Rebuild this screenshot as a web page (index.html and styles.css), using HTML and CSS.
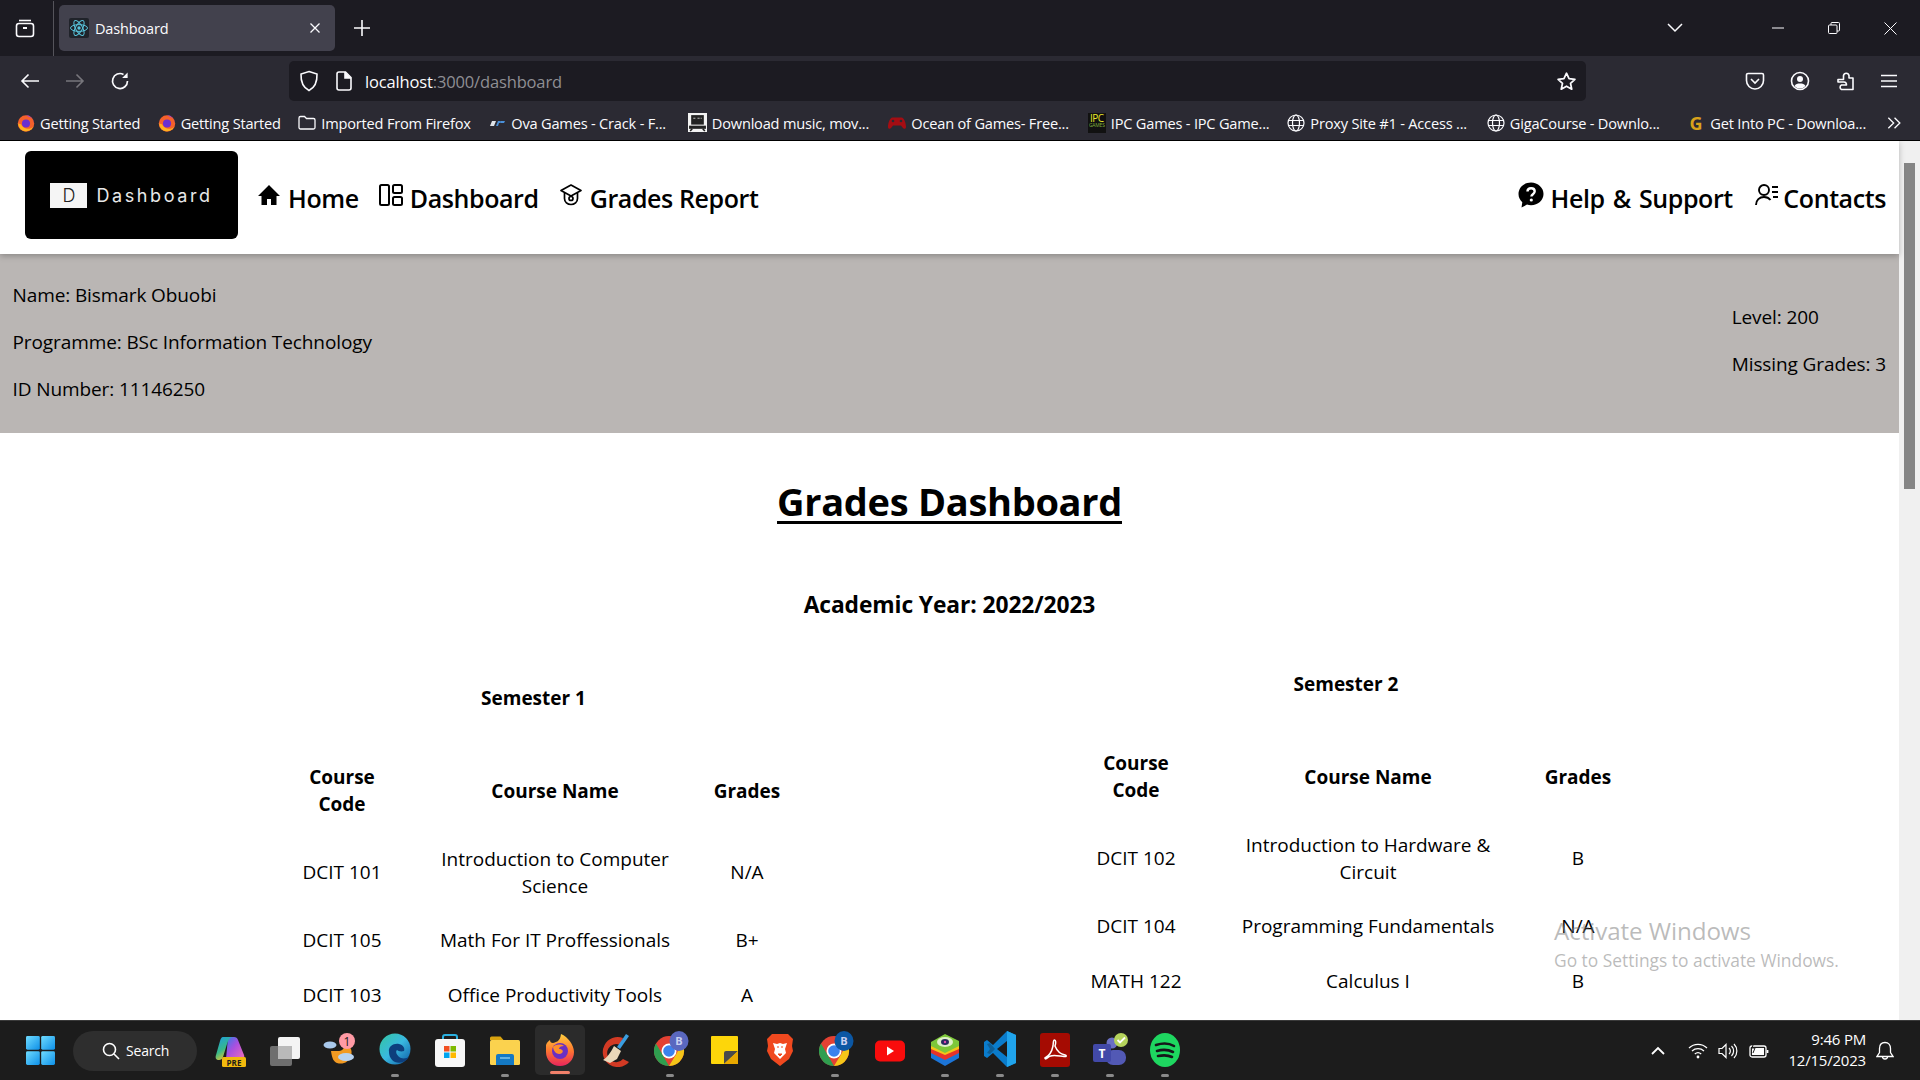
FILE: index.html
```html
<!DOCTYPE html>
<html lang="en">
<head>
<meta charset="utf-8">
<title>Dashboard</title>
<link rel="stylesheet" href="styles.css">
</head>
<body>
<div class="screen">
  <header class="tabbar">
    <div class="tab-list-btn">
      <svg width="20" height="20" viewBox="0 0 20 20" fill="none" stroke="#fbfbfe" stroke-width="1.6"><path d="M4 2.5h12"/><rect x="1.5" y="5.5" width="17" height="13" rx="2.5"/><path d="M8 10h4" stroke-width="2"/></svg>
    </div>
    <div class="tab">
      <span class="tab-fav"><svg width="20" height="20" viewBox="0 0 20 20" fill="none" stroke="#58c4dc" stroke-width="1"><ellipse cx="10" cy="10" rx="8.5" ry="3.4"/><ellipse cx="10" cy="10" rx="8.5" ry="3.4" transform="rotate(60 10 10)"/><ellipse cx="10" cy="10" rx="8.5" ry="3.4" transform="rotate(120 10 10)"/><circle cx="10" cy="10" r="1.7" fill="#58c4dc" stroke="none"/></svg></span>
      <span class="tab-title">Dashboard</span>
      <svg width="12" height="12" viewBox="0 0 12 12" stroke="#fbfbfe" stroke-width="1.3"><path d="M1.5 1.5l9 9M10.5 1.5l-9 9"/></svg>
    </div>
    <svg class="new-tab" width="16" height="16" viewBox="0 0 16 16" stroke="#fbfbfe" stroke-width="1.6"><path d="M8 0v16M0 8h16"/></svg>
    <div class="tabbar-right">
      <svg width="16" height="10" viewBox="0 0 16 10" fill="none" stroke="#fbfbfe" stroke-width="1.5"><path d="M1 1l7 7 7-7"/></svg>
      <div class="win-controls">
        <svg width="12" height="12" viewBox="0 0 12 12" stroke="#fbfbfe" stroke-width="1"><path d="M0 6h12"/></svg>
        <svg width="12" height="12" viewBox="0 0 12 12" fill="none" stroke="#fbfbfe" stroke-width="1"><rect x=".5" y="3" width="8.5" height="8.5" rx="1"/><path d="M3 3V1.5a1 1 0 0 1 1-1h6.5a1 1 0 0 1 1 1V8a1 1 0 0 1-1 1H9"/></svg>
        <svg width="13" height="13" viewBox="0 0 13 13" stroke="#fbfbfe" stroke-width="1"><path d="M.5.5l12 12M12.5.5l-12 12"/></svg>
      </div>
    </div>
  </header>

  <nav class="toolbar">
    <div class="nav-btns">
      <svg width="20" height="16" viewBox="0 0 20 16" fill="none" stroke="#fbfbfe" stroke-width="1.6"><path d="M19 8H2M8.500 1.500L2 8l6.500 6.500"/></svg>
      <svg width="20" height="16" viewBox="0 0 20 16" fill="none" stroke="#77767c" stroke-width="1.6"><path d="M1 8h17M11.500 1.500L18 8l-6.500 6.500"/></svg>
      <svg width="20" height="20" viewBox="0 0 20 20" fill="none" stroke="#fbfbfe" stroke-width="1.7"><path d="M17.500 10A7.500 7.500 0 1 1 13.500 3.400"/><path d="M17.600 1.500V7h-5.500" fill="#fbfbfe" stroke="none"/></svg>
    </div>
    <div class="urlbar">
      <svg width="20" height="22" viewBox="0 0 20 22" fill="none" stroke="#fbfbfe" stroke-width="1.6"><path d="M10 1.500l8 2.500c.3 8-2 13.500-8 16.500C4 17.500 1.700 12 2 4z"/></svg>
      <svg class="page-ic" width="16" height="20" viewBox="0 0 16 20" fill="none" stroke="#fbfbfe" stroke-width="1.6"><path d="M3 1h6.500L15 6.500V17a2 2 0 0 1-2 2H3a2 2 0 0 1-2-2V3a2 2 0 0 1 2-2z"/><path d="M9 1v6h6" fill="#fbfbfe"/></svg>
      <span class="url"><span class="url-host">localhost</span>:3000/dashboard</span>
      <svg class="star" width="21" height="21" viewBox="0 0 24 24" fill="none" stroke="#fbfbfe" stroke-width="2" stroke-linejoin="round"><path d="M12 2.500l2.900 6.200 6.700.8-5 4.600 1.400 6.700-6-3.400-6 3.400 1.400-6.700-5-4.600 6.700-.8z"/></svg>
    </div>
    <div class="tools">
      <svg width="20" height="20" viewBox="0 0 20 20" fill="none" stroke="#fbfbfe" stroke-width="1.6"><path d="M3 2.500h14a1.500 1.500 0 0 1 1.500 1.500v5.500a8.500 8.500 0 0 1-17 0V4A1.500 1.500 0 0 1 3 2.500z"/><path d="M6 8l4 4 4-4"/></svg>
      <svg width="20" height="20" viewBox="0 0 20 20" fill="none" stroke="#fbfbfe" stroke-width="1.6"><circle cx="10" cy="10" r="8.500"/><circle cx="10" cy="8" r="3" fill="#fbfbfe" stroke="none"/><path d="M4.500 15c1-2 3-2.500 5.500-2.500s4.500.5 5.500 2.500c-1.500 1.700-3.500 2.500-5.500 2.500S6 16.700 4.500 15z" fill="#fbfbfe" stroke="none"/></svg>
      <svg width="20" height="20" viewBox="0 0 20 20" fill="none" stroke="#fbfbfe" stroke-width="1.6" stroke-linejoin="round"><path d="M3 8.500h5.500V5a2.700 2.700 0 0 1 0-.5 2.800 2.800 0 0 1 5.500 0V7h4v11.500H6.500a2.500 2.500 0 0 1 0-4.500h5c0-1.500-1-3-2.500-3H3z"/></svg>
      <svg width="18" height="14" viewBox="0 0 18 14" stroke="#fbfbfe" stroke-width="1.6"><path d="M1 1.500h16M1 7h16M1 12.500h16"/></svg>
    </div>
  </nav>

  <div class="bookmarks">
    <a class="bm"><svg width="18" height="18" viewBox="0 0 16 16"><circle cx="8" cy="8.500" r="7.300" fill="#f5602b"/><path d="M8 1.200a7 7 0 0 1 7 7c0-3-2-5-4-5.500z" fill="#9a3fe0"/><circle cx="8" cy="8.500" r="3.600" fill="#6a2fd0"/><path d="M1 8.500a7 7 0 0 0 13.500 2.500C12 14 6 14 3.500 9z" fill="#ffb020"/></svg><span>Getting Started</span></a>
    <a class="bm"><svg width="18" height="18" viewBox="0 0 16 16"><circle cx="8" cy="8.500" r="7.300" fill="#f5602b"/><path d="M8 1.200a7 7 0 0 1 7 7c0-3-2-5-4-5.500z" fill="#9a3fe0"/><circle cx="8" cy="8.500" r="3.600" fill="#6a2fd0"/><path d="M1 8.500a7 7 0 0 0 13.500 2.500C12 14 6 14 3.500 9z" fill="#ffb020"/></svg><span>Getting Started</span></a>
    <a class="bm"><svg width="18" height="17" viewBox="0 0 18 16" fill="none" stroke="#fbfbfe" stroke-width="1.300"><path d="M1 3.500a1.500 1.500 0 0 1 1.500-1.500h4l2 2h7a1.500 1.500 0 0 1 1.500 1.500v7.500a1.500 1.500 0 0 1-1.500 1.500h-13A1.500 1.500 0 0 1 1 13z"/></svg><span>Imported From Firefox</span></a>
    <a class="bm"><svg width="18" height="16" viewBox="0 0 18 16"><path d="M2 11l2-5h4l-2 5z" fill="#dfe3e8"/><path d="M8 11l2-5h3l-1 2h-1l-1 3z" fill="#4a90d9"/><path d="M13 6h4l-1 2h-4z" fill="#4a90d9"/></svg><span class="trunc">Ova Games - Crack - F...</span></a>
    <a class="bm"><svg width="19" height="19" viewBox="0 0 18 18"><rect x="0" y="0" width="18" height="18" fill="#f2f2f2"/><rect x="3" y="2" width="12" height="9" fill="#222"/><path d="M5 5h2M9 5h2M12 5h1" stroke="#bbb" stroke-width="1"/><path d="M1 12h16v3H1z" fill="#222"/><path d="M4 15l-2 2M14 15l2 2" stroke="#222" stroke-width="1.500"/></svg><span class="trunc">Download music, mov...</span></a>
    <a class="bm"><svg width="18" height="16" viewBox="0 0 18 16"><path d="M4.500 2.500h9C16 2.500 18 8 18 12c0 2-2 2.500-3.500.5L13 10.500H5L3.500 12.500C2 14.500 0 14 0 12 0 8 2 2.500 4.500 2.500z" fill="#a50d13"/><circle cx="5" cy="6" r="1.300" fill="#2b2a33"/><circle cx="13" cy="6" r="1.300" fill="#2b2a33"/></svg><span class="trunc">Ocean of Games- Free...</span></a>
    <a class="bm"><span class="ipc"><span class="ipc-top">IPC</span><span class="ipc-sub">GAMES</span></span><span class="trunc">IPC Games - IPC Game...</span></a>
    <a class="bm"><svg width="18" height="18" viewBox="0 0 18 18" fill="none" stroke="#fbfbfe" stroke-width="1.200"><circle cx="9" cy="9" r="8"/><ellipse cx="9" cy="9" rx="3.500" ry="8"/><path d="M1.500 6.500h15M1.500 11.500h15"/></svg><span class="trunc">Proxy Site #1 - Access ...</span></a>
    <a class="bm"><svg width="18" height="18" viewBox="0 0 18 18" fill="none" stroke="#fbfbfe" stroke-width="1.200"><circle cx="9" cy="9" r="8"/><ellipse cx="9" cy="9" rx="3.500" ry="8"/><path d="M1.500 6.500h15M1.500 11.500h15"/></svg><span class="trunc">GigaCourse - Downlo...</span></a>
    <a class="bm"><span class="g-ic">G</span><span class="trunc">Get Into PC - Downloa...</span></a>
    <svg class="more" width="16" height="14" viewBox="0 0 16 14" fill="none" stroke="#fbfbfe" stroke-width="1.500"><path d="M1.500 1l6 6-6 6M8.500 1l6 6-6 6"/></svg>
  </div>

  <div class="viewport">
    <div class="page">
      <div class="site-nav">
        <div class="nav-group">
          <div class="logo"><span class="logo-d">D</span><span class="logo-text">Dashboard</span></div>
          <a class="nav-link"><svg width="24" height="24" viewBox="0 0 24 24"><path d="M12 2L1 13h3.500v9h5.500v-6h4v6h5.500v-9H23z" fill="#000"/></svg>Home</a>
          <a class="nav-link"><svg width="24" height="24" viewBox="0 0 24 24" fill="none" stroke="#000" stroke-width="2"><rect x="1" y="2" width="9" height="20" rx="1.500"/><rect x="14" y="2" width="9" height="8" rx="1.500"/><rect x="14" y="14" width="9" height="8" rx="1.500"/></svg>Dashboard</a>
          <a class="nav-link"><svg width="24" height="24" viewBox="0 0 24 24" fill="none" stroke="#000" stroke-width="1.700" stroke-linejoin="round"><path d="M12 2L2 7.500l10 5.500 10-5.500z"/><path d="M5.500 10v5.500C5.500 19 8.500 21.500 12 21.500s6.500-2.500 6.500-6V10"/><circle cx="12" cy="15.500" r="2"/></svg>Grades Report</a>
        </div>
        <div class="nav-group">
          <a class="nav-link help"><svg width="26" height="26" viewBox="0 0 26 26"><path d="M13 .5C6 .5.500 5.500.500 12c0 3.300 1.500 6.200 3.800 8.300L3.500 25.500l5.500-2.900c1.300.4 2.600.6 4 .6 7 0 12.500-5 12.500-11.200S20 .5 13 .5z" fill="#000"/><path d="M9.500 9.500c0-2 1.500-3.300 3.600-3.300s3.600 1.300 3.600 3.100c0 2.900-3.300 2.800-3.300 5.200" fill="none" stroke="#fff" stroke-width="2.400"/><circle cx="13.300" cy="18" r="1.600" fill="#fff"/></svg>Help &amp; Support</a>
          <a class="nav-link contacts"><svg width="24" height="24" viewBox="0 0 24 24" fill="none" stroke="#000" stroke-width="1.900"><circle cx="9" cy="7" r="5"/><path d="M1 22c0-5 3.500-8 8-8 3 0 5 1 6.500 3"/><path d="M17 4h6M17 9h6M18 14h5"/></svg>Contacts</a>
        </div>
      </div>

      <section class="student">
        <div>
          <p>Name: Bismark Obuobi</p>
          <p>Programme: BSc Information Technology</p>
          <p>ID Number: 11146250</p>
        </div>
        <div class="student-right">
          <p>Level: 200</p>
          <p>Missing Grades: 3</p>
        </div>
      </section>

      <main class="content">
        <h1>Grades Dashboard</h1>
        <h2>Academic Year: 2022/2023</h2>
        <div class="semesters">
          <div class="semester semester-one">
            <h3>Semester 1</h3>
            <table class="grades">
              <thead>
                <tr><th class="c-code">Course Code</th><th class="c-name">Course Name</th><th class="c-grade">Grades</th></tr>
              </thead>
              <tbody>
                <tr><td>DCIT 101</td><td>Introduction to Computer Science</td><td>N/A</td></tr>
                <tr><td>DCIT 105</td><td>Math For IT Proffessionals</td><td>B+</td></tr>
                <tr><td>DCIT 103</td><td>Office Productivity Tools</td><td>A</td></tr>
              </tbody>
            </table>
          </div>
          <div class="semester semester-two">
            <h3>Semester 2</h3>
            <table class="grades">
              <thead>
                <tr><th class="c-code">Course Code</th><th class="c-name">Course Name</th><th class="c-grade">Grades</th></tr>
              </thead>
              <tbody>
                <tr><td>DCIT 102</td><td>Introduction to Hardware &amp; Circuit</td><td>B</td></tr>
                <tr><td>DCIT 104</td><td>Programming Fundamentals</td><td>N/A</td></tr>
                <tr><td>MATH 122</td><td>Calculus I</td><td>B</td></tr>
              </tbody>
            </table>
          </div>
        </div>
      </main>
    </div>
    <div class="scrollbar"><div class="thumb"></div></div>
    <div class="activate">
      <div class="activate-title">Activate Windows</div>
      <div class="activate-sub">Go to Settings to activate Windows.</div>
    </div>
  </div>

  <footer class="taskbar">
    <div class="tb-start"><svg width="29" height="29" viewBox="0 0 30 30"><defs><linearGradient id="win" x1="0" y1="0" x2="1" y2="1"><stop offset="0" stop-color="#6fdcff"/><stop offset="1" stop-color="#0d8fe8"/></linearGradient></defs><rect x="0" y="0" width="14.300" height="14.300" rx="1.500" fill="url(#win)"/><rect x="15.700" y="0" width="14.300" height="14.300" rx="1.500" fill="url(#win)"/><rect x="0" y="15.700" width="14.300" height="14.300" rx="1.500" fill="url(#win)"/><rect x="15.700" y="15.700" width="14.300" height="14.300" rx="1.500" fill="url(#win)"/></svg></div>
    <div class="tb-search"><svg width="18" height="18" viewBox="0 0 18 18" fill="none" stroke="#fff" stroke-width="1.600"><circle cx="7.500" cy="7.500" r="6"/><path d="M12 12l5 5"/></svg><span>Search</span></div>
    <div class="tb-icons">
      <div class="tb-item"><svg width="32" height="32" viewBox="0 0 32 32"><defs><linearGradient id="copl" x1="0" y1="0" x2=".5" y2="1"><stop offset="0" stop-color="#1b9be8"/><stop offset=".6" stop-color="#37b98a"/><stop offset="1" stop-color="#e8c630"/></linearGradient><linearGradient id="copr" x1="0" y1="0" x2="1" y2="1"><stop offset="0" stop-color="#2f7fe6"/><stop offset=".45" stop-color="#a94fe0"/><stop offset="1" stop-color="#ee6fb8"/></linearGradient></defs><path d="M14 2h6c2 0 3.500 1 4 3l6 15c1 2.500-.5 4-2 4H12z" fill="url(#copr)"/><path d="M9 2h9c-3 1-4 4-5 7l-4 13c-.7 2-2 3-4 3-3 0-4-2-3-5L6 6c.6-2 1.500-4 3-4z" fill="url(#copl)"/><rect x="8" y="22" width="24" height="10" rx="1.500" fill="#f2b90d"/><text x="20" y="30.500" class="pre">PRE</text></svg><i class="dot none"></i></div>
      <div class="tb-item"><svg width="32" height="32" viewBox="0 0 32 32"><rect x="9" y="2" width="22" height="22" rx="2" fill="#f4f4f4"/><rect x="1" y="11" width="22" height="20" rx="2" fill="#6e6e6e"/><rect x="9" y="11" width="14" height="13" fill="#b9b9b9"/></svg><i class="dot none"></i></div>
      <div class="tb-item"><svg width="34" height="34" viewBox="0 0 34 34"><path d="M8 18h8c4 0 6-4 6-8 5 3 8 7 6 13-2 6-8 9-14 7-3-1-5-4-6-12z" fill="#f29a22"/><ellipse cx="7" cy="12" rx="6.500" ry="3.500" fill="#a9c9ec"/><ellipse cx="23" cy="24" rx="8" ry="4" fill="#b7d2f0"/><circle cx="24" cy="8" r="8" fill="#ff9aa5"/><text x="24" y="12.500" class="badge-num">1</text></svg><i class="dot none"></i></div>
      <div class="tb-item"><svg width="32" height="36" viewBox="0 0 32 36"><defs><linearGradient id="edge" x1="0" y1="0" x2="1" y2="1"><stop offset="0" stop-color="#33c6a0"/><stop offset=".5" stop-color="#39b8e0"/><stop offset="1" stop-color="#0c59a4"/></linearGradient></defs><circle cx="16" cy="18" r="15.500" fill="url(#edge)"/><path d="M10 21c-1-6 5-9 10-8 5 1 6 5 5 7-3 1-6 0-7-1-2 2 0 6 4 8 3 1 6 0 8-1-3 5-9 7-14 5-4-2-6-6-6-10z" fill="#0d3f7d"/></svg><i class="dot"></i></div>
      <div class="tb-item"><svg width="30" height="34" viewBox="0 0 30 34"><path d="M8 7V4a2 2 0 0 1 2-2h10a2 2 0 0 1 2 2v3" fill="none" stroke="#2ab0e0" stroke-width="2"/><rect x="0" y="6" width="30" height="28" rx="3" fill="#f7f7f7"/><rect x="9" y="13" width="5.500" height="5.500" fill="#f25022"/><rect x="15.500" y="13" width="5.500" height="5.500" fill="#7fba00"/><rect x="9" y="19.500" width="5.500" height="5.500" fill="#00a4ef"/><rect x="15.500" y="19.500" width="5.500" height="5.500" fill="#ffb900"/></svg><i class="dot none"></i></div>
      <div class="tb-item"><svg width="32" height="32" viewBox="0 0 32 32"><path d="M1 3a1.500 1.500 0 0 1 1.500-1.500h9l3 3.500H1z" fill="#d9a30f"/><rect x="1" y="5" width="30" height="25" rx="1.500" fill="#fbd24e"/><path d="M7 21a2 2 0 0 1 2-2h14a2 2 0 0 1 2 2v9H7z" fill="#1479c4"/><path d="M11 23h10" stroke="#7fc6ee" stroke-width="1.500"/></svg><i class="dot"></i></div>
      <div class="tb-item active"><svg width="30" height="34" viewBox="0 0 30 34"><defs><linearGradient id="ff" x1="0" y1="0" x2="0" y2="1"><stop offset="0" stop-color="#ffcf3f"/><stop offset=".5" stop-color="#ff7a2f"/><stop offset="1" stop-color="#e8255c"/></linearGradient></defs><path d="M1 13c1-3 3-4 4-5 0 2 1 3 3 3 3-1 7-1 8-9 7 3 13 11 13 18 0 8-6 14-14 14S1 28 1 20z" fill="url(#ff)"/><circle cx="15" cy="19" r="8" fill="#6b2fc2"/><path d="M8 15c3-3 8-3 11-1-3 0-5 1-5 3 3 0 5 2 3 4-3 2-8 1-9-6z" fill="#ff8f2a"/></svg><i class="dot wide"></i></div>
      <div class="tb-item"><svg width="34" height="34" viewBox="0 0 34 34"><path d="M25 5a15 15 0 1 0 6 24l-6-3a9 9 0 1 1-3-14z" fill="#d23a24"/><path d="M28 1l3 2-9 13-3-2z" fill="#3a9ee0"/><path d="M16 13l7 5-4 8-7 4-7-3c4-2 8-8 11-14z" fill="#e9d7b9"/></svg><i class="dot none"></i></div>
      <div class="tb-item chrome"><svg width="36" height="36" viewBox="0 0 36 36"><circle cx="15" cy="20" r="15" fill="#e34133"/><path d="M2 12.500l7 12 6 10.500a15 15 0 0 1-13-22.500z" fill="#2f9e4f"/><path d="M15 35l7-11.500 6-11a15 15 0 0 1-13 22.500z" fill="#f5c518"/><circle cx="15" cy="20" r="7.500" fill="#fff"/><circle cx="15" cy="20" r="5.800" fill="#3b82ee"/><ellipse cx="25" cy="10" rx="9.500" ry="10" fill="#5a68bf"/><text x="25" y="14" class="profile">B</text></svg><i class="dot"></i></div>
      <div class="tb-item"><svg class="sticky" width="27" height="28" viewBox="0 0 27 28"><rect width="27" height="28" rx="1" fill="#fdd60a"/><path d="M13 28V17a2 2 0 0 1 2-2h12z" fill="#4a4a4a"/><path d="M27 15v13H13z" fill="#e8a800"/></svg><i class="dot none"></i></div>
      <div class="tb-item"><svg width="30" height="34" viewBox="0 0 30 34"><path d="M7 1h16l5 5-1 7 1 5-4 8-9 7-9-7-4-8 1-5-1-7z" fill="#f0491f"/><path d="M8 10l4 1 3-1 3 1 4-1-2 6 1 4-3 3-3 3-3-3-3-3 1-4z" fill="#fff"/><path d="M12 14h2M16 14h2M13 21l2 2 2-2z" fill="#f0491f" stroke="#f0491f"/></svg><i class="dot none"></i></div>
      <div class="tb-item chrome"><svg width="36" height="36" viewBox="0 0 36 36"><circle cx="15" cy="20" r="15" fill="#e34133"/><path d="M2 12.500l7 12 6 10.500a15 15 0 0 1-13-22.500z" fill="#2f9e4f"/><path d="M15 35l7-11.500 6-11a15 15 0 0 1-13 22.500z" fill="#f5c518"/><circle cx="15" cy="20" r="7.500" fill="#fff"/><circle cx="15" cy="20" r="5.800" fill="#3b82ee"/><ellipse cx="25" cy="10" rx="9.500" ry="10" fill="#0b57a4"/><text x="25" y="14" class="profile">B</text></svg><i class="dot"></i></div>
      <div class="tb-item"><svg class="yt" width="30" height="24" viewBox="0 0 30 24"><rect width="30" height="21" y="1.500" rx="5" fill="#f90c0c"/><path d="M12 7.500l7 4.500-7 4.500z" fill="#fff"/></svg><i class="dot none"></i></div>
      <div class="tb-item"><svg width="30" height="34" viewBox="0 0 30 34"><path d="M1 18l14-6 14 6v7l-14 8-14-8z" fill="#1c75d8"/><path d="M1 14l14-6 14 6v6l-14 7-14-7z" fill="#e8342a"/><path d="M1 11l14-6 14 6v5l-14 6-14-6z" fill="#f5c518"/><path d="M1 9l14-8 14 7v5l-14 7-14-7z" fill="#7dc83a"/><ellipse cx="15" cy="9" rx="8" ry="5" fill="#dff0c8"/><ellipse cx="15" cy="9" rx="4" ry="3" fill="#2a2a60"/><circle cx="15" cy="9" r="1.200" fill="#e04ab0"/></svg><i class="dot"></i></div>
      <div class="tb-item"><svg width="32" height="36" viewBox="0 0 32 36"><path d="M23 0l9 4v28l-9 4-14-14-6 5-3-2V11l3-2 6 5z" fill="#0a7ccc"/><path d="M23 0l9 4v28l-9 4z" fill="#20a4ec"/><path d="M23 10v16l-10-8z" fill="#1c1c1c"/><path d="M3 13l3-1 5 6-5 5-3-1 3-4z" fill="#1c1c1c" opacity=".3"/></svg><i class="dot"></i></div>
      <div class="tb-item"><svg width="30" height="34" viewBox="0 0 30 34"><rect width="30" height="34" rx="3" fill="#a50b02"/><path d="M5 25c4-2 7-7 8-12 .5-3 0-6 1.500-6S16 10 15 13c2 5 5 8 10 9 2 .5 1.500 2-1 1.500-5-.5-10-2-13.500-.5-3 1-5 4.500-5.500 2z" fill="none" stroke="#fff" stroke-width="1.500"/></svg><i class="dot"></i></div>
      <div class="tb-item"><svg width="36" height="34" viewBox="0 0 36 34"><circle cx="20" cy="10" r="5.500" fill="#6b70c4"/><rect x="14" y="17" width="20" height="15" rx="7" fill="#5259b5"/><rect x="1" y="11" width="18" height="18" rx="2" fill="#4249a8"/><text x="10" y="25" class="teams-t">T</text><circle cx="29" cy="7" r="7" fill="#b5d35c"/><path d="M25.500 7l2.500 2.500 5-5" fill="none" stroke="#fff" stroke-width="1.800"/></svg><i class="dot"></i></div>
      <div class="tb-item"><svg width="30" height="34" viewBox="0 0 30 34"><ellipse cx="15" cy="17" rx="15" ry="17" fill="#1ed760"/><path d="M6 12c6-2 13-2 18 1M7 18c5-1.500 11-1.500 16 1M8 23c5-1 10-1 14 1" fill="none" stroke="#16161a" stroke-width="2.600" stroke-linecap="round"/></svg><i class="dot"></i></div>
    </div>
    <div class="tray">
      <svg width="14" height="9" viewBox="0 0 14 9" fill="none" stroke="#fff" stroke-width="1.800"><path d="M1 8l6-6 6 6"/></svg>
      <svg class="tray-wifi" width="20" height="17" viewBox="0 0 20 17" fill="none" stroke="#fff" stroke-width="1.300"><path d="M1 6a13 13 0 0 1 18 0M4 9a9 9 0 0 1 12 0M6.800 12a5 5 0 0 1 6.400 0"/><circle cx="10" cy="15" r="1.400" fill="#fff" stroke="none"/></svg>
      <svg class="tray-vol" width="20" height="18" viewBox="0 0 20 18" fill="none" stroke="#fff" stroke-width="1.200"><path d="M1 6.500h3l4-4v13l-4-4H1z"/><path d="M11 6a4 4 0 0 1 0 6M13.500 4a7 7 0 0 1 0 10M16 2a10 10 0 0 1 0 14"/></svg>
      <svg width="20" height="18" viewBox="0 0 20 18" fill="none" stroke="#fff" stroke-width="1.300"><rect x="1" y="4" width="16" height="11" rx="2"/><path d="M18.500 8v3" stroke-width="1.800"/><rect x="3" y="6" width="12" height="7" fill="#fff" stroke="none"/><path d="M5 0L3 6h3l-2 5" stroke="#1c1c1c" stroke-width="1"/></svg>
      <div class="clock"><div>9:46 PM</div><div>12/15/2023</div></div>
      <svg width="18" height="20" viewBox="0 0 18 20" fill="none" stroke="#fff" stroke-width="1.300"><path d="M9 1.500c-3.500 0-5.500 2.500-5.500 6v4L1 15.500h16l-2.500-4v-4c0-3.500-2-6-5.500-6z"/><path d="M6.500 15.500a2.500 2.500 0 0 0 5 0"/></svg>
    </div>
  </footer>
</div>
</body>
</html>
```
FILE: styles.css
```css
* { box-sizing: border-box; }
html, body { margin: 0; padding: 0; height: 100%; overflow: hidden; }
body { font-family: "Open Sans", "Noto Sans", sans-serif; background: #fff; color: #000; }
.screen { width: 1920px; height: 1080px; display: flex; flex-direction: column; overflow: hidden; }

/* tab bar */
.tabbar { height: 56px; flex: none; background: #1c1b22; display: flex; align-items: center; position: relative; }
.tab-list-btn { width: 54px; height: 55px; display: flex; align-items: center; justify-content: center; padding-right: 3px; border-right: 1px solid #55545b; }
.tab { width: 276px; height: 46px; margin-left: 5px; background: #42414d; border-radius: 5px; display: flex; align-items: center; padding: 0 14px 0 10px; color: #fbfbfe; font-size: 14.500px; letter-spacing: -.15px; }
.tab-fav { width: 20px; height: 20px; background: #20232a; display: flex; margin-right: 6px; border-radius: 2px; }
.tab-title { flex: 1; }
.new-tab { margin-left: 19px; }
.tabbar-right { margin-left: auto; display: flex; align-items: center; }
.win-controls { display: flex; align-items: center; gap: 44px; margin-left: 89px; padding-right: 23px; }

/* toolbar */
.toolbar { height: 46px; flex: none; background: #2b2a33; display: flex; align-items: flex-start; padding-top: 5px; }
.nav-btns { display: flex; align-items: center; gap: 25px; width: 289px; padding: 0 0 0 20px; height: 40px; }
.urlbar { width: 1297px; height: 40px; background: #1c1b22; border-radius: 5px; display: flex; align-items: center; padding: 0 9px 0 10px; color: #8f8f94; font-size: 16.500px; letter-spacing: -.15px; }
.page-ic { margin-left: 17px; }
.url { margin-left: 13px; flex: 1; }
.url-host { color: #fbfbfe; }
.tools { display: flex; align-items: center; gap: 25px; height: 40px; margin-left: 159px; }

/* bookmarks */
.bookmarks { height: 39px; flex: none; background: #2b2a33; border-bottom: 1px solid #000; display: flex; align-items: center; gap: 17.500px; padding: 3px 17px 0 17px; color: #fbfbfe; font-size: 14.600px; letter-spacing: -.2px; white-space: nowrap; }
.bm { display: flex; align-items: center; gap: 5px; }
.trunc { width: 159px; }
.ipc { width: 18px; height: 20px; background: #111; display: flex; flex-direction: column; align-items: center; line-height: 1; }
.ipc-top { color: #e8e82a; font-size: 10px; letter-spacing: -.5px; }
.ipc-sub { color: #7fae3a; font-size: 5px; letter-spacing: -.2px; }
.g-ic { width: 19px; color: #d9a21b; font-weight: 700; font-size: 18px; line-height: 18px; text-align: center; }
.more { margin-left: auto; margin-right: 2px; }

/* viewport */
.viewport { flex: 1; min-height: 0; display: flex; position: relative; overflow: hidden; }
.page { flex: 1; min-width: 0; }
.scrollbar { width: 21px; flex: none; background: #f0f0f0; padding: 22px 5px 0; }
.thumb { height: 326px; background: #858585; }
.activate { position: absolute; left: 1554px; top: 774px; color: rgba(120, 120, 120, .5); }
.activate-title { font-size: 24.200px; line-height: 32px; letter-spacing: -.1px; }
.activate-sub { font-size: 17.400px; line-height: 24px; margin-top: 1px; }

/* site nav */
.site-nav { height: 113px; display: flex; justify-content: space-between; align-items: center; padding: 0 13px 0 25px; background: #fff; position: relative; box-shadow: 0 2px 6px rgba(0, 0, 0, .25); }
.nav-group { display: flex; align-items: center; gap: 20px; }
.logo { width: 213px; height: 88px; margin-top: -5px; background: #000; border-radius: 6px; display: flex; align-items: center; justify-content: center; gap: 9px; color: #e8e8e8; margin-right: -1px; }
.logo-d { width: 37px; height: 25px; background: #f5f5f5; color: #222; display: flex; align-items: center; justify-content: center; font-family: "Inter", sans-serif; font-size: 18px; font-weight: 300; }
.logo-text { font-family: "Inter", sans-serif; font-size: 18px; font-weight: 400; letter-spacing: 2.600px; }
.nav-link { display: flex; align-items: center; gap: 7px; font-size: 25px; font-weight: 600; letter-spacing: -.4px; }
.nav-link svg { margin-top: -6px; }
.help { word-spacing: 2px; }
.contacts { gap: 4px; margin-left: 2.500px; }

/* student */
.student { height: 179px; background: #bab6b4; display: flex; justify-content: space-between; align-items: center; padding: 0 13px 2px 12.500px; font-size: 19px; letter-spacing: -.1px; }
.student-right { margin-bottom: 3px; }
.student p { margin: 0; line-height: 27px; }
.student p + p { margin-top: 20px; }

/* content */
.content { text-align: center; }
h1 { margin: 41px 0 0; font-size: 38px; line-height: 54px; font-weight: 700; text-decoration: underline; text-underline-offset: 5px; letter-spacing: -.3px; }
h2 { margin: 62px 0 0; font-size: 22.800px; line-height: 30px; font-weight: 700; letter-spacing: -.1px; }
.semesters { display: flex; align-items: flex-start; gap: 288px; padding-left: 290px; margin-top: 50px; }
.semester-one { margin-top: 14px; }
h3 { margin: 0 0 38px; font-size: 19px; line-height: 28px; font-weight: 700; }
.semester-one h3 { padding-right: 5px; }
.grades { border-collapse: collapse; table-layout: fixed; font-size: 19px; line-height: 27px; }
.grades th { padding: 14px 0; font-weight: 700; }
.grades td { padding: 13.750px 0; }
.semester-one .grades { width: 492px; }
.semester-two .grades { width: 552px; }
.semester-one .c-code { width: 104px; }
.semester-one .c-name { width: 318px; padding-left: 4px; }
.semester-one .c-grade { width: 70px; }
.semester-one td:nth-child(2) { padding: 13.750px 38px 13.750px 42px; }
.semester-two .c-code { width: 132px; padding: 14px 30px; }
.semester-two .c-name { width: 332px; }
.semester-two .c-grade { width: 88px; }
.semester-two td:nth-child(2) { padding: 13.750px 35px; }

/* taskbar */
.taskbar { height: 60px; flex: none; background: #1c1c1c; border-top: 1px solid #3a3a3a; display: flex; align-items: center; color: #fff; position: relative; }
.tb-start { width: 73px; display: flex; justify-content: center; padding-left: 7px; }
.tb-search { width: 124px; height: 40px; background: #2e2e2e; border-radius: 20px; display: flex; align-items: center; gap: 6px; padding-left: 29px; font-size: 14px; letter-spacing: -.2px; }
.tb-icons { display: flex; margin-left: 5px; }
.tb-item { width: 55px; height: 59px; display: flex; flex-direction: column; align-items: center; justify-content: flex-end; padding-bottom: 3px; gap: 5px; border-radius: 5px; }
.tb-item svg { display: block; margin-bottom: 2px; }
.tb-item.chrome svg { margin-left: 4px; }
.tb-item svg.sticky { margin-bottom: 5px; }
.tb-item svg.yt { margin-bottom: 6px; }
.dot { width: 8px; height: 3.500px; background: #8a8a8a; border-radius: 2px; }
.dot.none { background: transparent; }
.dot.wide { width: 20px; background: #f0806a; }
.tb-item.active { background: #2b2b2b; width: 50px; height: 50px; margin: 4px 2.500px 0; padding-bottom: 1px; gap: 3px; }
.tray { margin-left: auto; display: flex; align-items: center; padding-right: 26px; }
.tray-wifi { margin-left: 23px; margin-right: 10px; }
.tray-vol { margin-right: 11px; }
.clock { margin-left: 19px; margin-right: 10px; padding-bottom: 2px; text-align: right; font-size: 15px; line-height: 21px; letter-spacing: -.2px; }
.pre { font: 700 8px "Open Sans", sans-serif; text-anchor: middle; fill: #1c1c1c; }
.badge-num { font: 400 12px "Open Sans", sans-serif; text-anchor: middle; fill: #1c1c1c; }
.profile { font: 700 11px "Open Sans", sans-serif; text-anchor: middle; fill: #c8d0f0; }
.teams-t { font: 700 12px "Open Sans", sans-serif; text-anchor: middle; fill: #fff; }
```
